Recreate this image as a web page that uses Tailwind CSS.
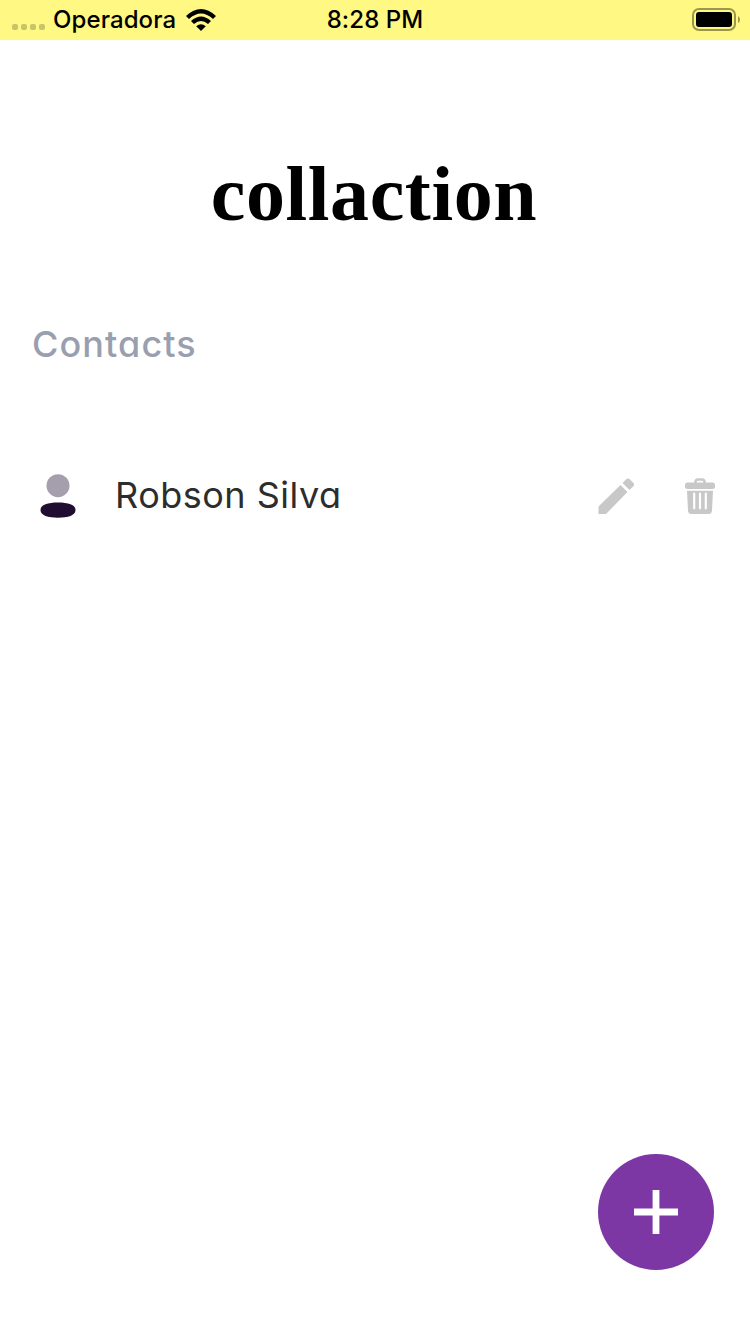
<!DOCTYPE html>
<html lang="en">
<head>
<meta charset="utf-8">
<meta name="viewport" content="width=device-width">
<title>collaction</title>
<script src="https://cdn.jsdelivr.net/npm/@tailwindcss/browser@4"></script>
</head>
<body class="flex h-[1334px] w-[750px] flex-col overflow-hidden bg-white font-['Inter',sans-serif]">
<header class="grid h-10 shrink-0 grid-cols-[300px_150px_300px] items-center bg-[#fff883] text-black">
  <div class="flex items-center pl-3">
    <div class="mt-[14px] flex gap-[3px]">
      <span class="size-1.5 rounded-[2px] bg-[#c9c46b]"></span><span class="size-1.5 rounded-[2px] bg-[#c9c46b]"></span><span class="size-1.5 rounded-[2px] bg-[#c9c46b]"></span><span class="size-1.5 rounded-[2px] bg-[#c9c46b]"></span>
    </div>
    <span class="ml-2 w-[123px] text-[24px] leading-10 font-medium tracking-[0.1px]">Operadora</span>
    <svg class="ml-[10px]" width="30" height="22" viewBox="0 0 30 22">
      <path d="M0 7Q15-7 30 7L27 10Q15-1 3 10Z"/>
      <path d="M5 12Q15 3 25 12L22 15Q15 9 8 15Z"/>
      <path d="M10.200 17.200Q15 13.200 19.800 17.200L15 22Z"/>
    </svg>
  </div>
  <span class="text-center text-[24px] leading-10 font-medium tracking-[0.1px] whitespace-nowrap">8:28 PM</span>
  <svg class="mr-[9px] justify-self-end" width="49" height="24" viewBox="0 0 49 24">
    <rect x="1" y="1" width="42" height="21" rx="6" fill="none" stroke="#9c974f" stroke-width="2"/>
    <rect x="4" y="4" width="36" height="15" rx="3"/>
    <path d="M46 8Q48 9 48 11.500T46 15Z" fill="#9c974f"/>
  </svg>
</header>
<main class="flex grow flex-col">
  <h1 class="mt-[109px] mr-0.5 h-[90px] text-center font-['Liberation_Serif',serif] text-[78px] leading-[90px] font-bold tracking-[0.6px] text-black">collaction</h1>
  <h2 class="mt-[75px] h-[60px] pl-8 text-[36px] leading-[60px] font-medium tracking-[1.1px] text-[#9a9fb0] [font-feature-settings:'cv11']">Contacts</h2>
  <div class="mt-[92px] flex h-[60px] items-center">
    <svg class="ml-10 shrink-0" width="36" height="44" viewBox="0 0 36 44">
      <circle cx="18" cy="11.700" r="11.500" fill="#a59eac"/>
      <path d="M.5 36C.5 30.500 8 28.600 18 28.600S35.500 30.500 35.500 36S28 43.700 18 43.700S.5 41.500 .5 36Z" fill="#210d31"/>
    </svg>
    <span class="-mt-0.5 ml-[39px] w-[230px] text-[36px] leading-[60px] tracking-[0.5px] whitespace-nowrap text-[#2d2d2d] [font-feature-settings:'cv11']">Robson Silva</span>
    <svg class="ml-auto shrink-0" width="37" height="36" viewBox="0 0 37 36" fill="#c8c8c8">
      <path d="M.5 28.500L22.500 7L29.500 14L8 36H.5Z"/>
      <path d="M24.500 5L28.200 1.300Q30-.5 31.800 1.300L35.400 4.900Q37 6.600 35.300 8.300L31.500 12Z"/>
    </svg>
    <svg class="mr-[35px] ml-[50px] shrink-0" width="30" height="36" viewBox="0 0 30 36">
      <path d="M10.500 6V4Q10.500 1.500 13 1.500H17Q19.500 1.500 19.500 4V6" fill="none" stroke="#c8c8c8" stroke-width="2.500"/>
      <rect y="4.500" width="30" height="6.500" rx="2.500" fill="#c8c8c8"/>
      <path d="M2 12.800H28L27 32.500Q26.800 36 23.500 36H6.500Q3.200 36 3 32.500Z" fill="#c8c8c8"/>
      <path d="M9.200 15.700V30.300M15 15.700V30.300M20.800 15.700V30.300" stroke="#fff" stroke-width="2.200" stroke-linecap="round"/>
    </svg>
  </div>
  <button class="mt-auto mr-9 mb-16 flex size-[116px] items-center justify-center self-end rounded-full bg-[#7c37a4]" aria-label="Add contact">
    <svg width="44" height="44" viewBox="0 0 44 44"><path d="M0 22H44M22 0V44" stroke="#fff" stroke-width="6.800"/></svg>
  </button>
</main>
</body>
</html>
